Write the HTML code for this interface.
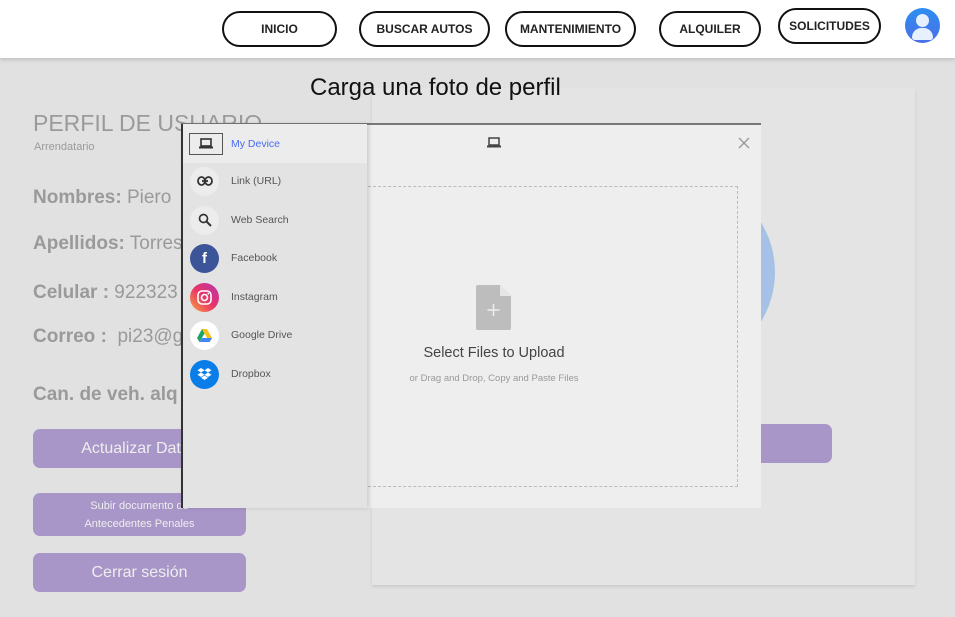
<!DOCTYPE html>
<html><head><meta charset="utf-8"><style>
*{margin:0;padding:0;box-sizing:border-box}
body{width:955px;height:617px;overflow:hidden;background:#e1e1e1;font-family:"Liberation Sans",sans-serif;position:relative}
.hdr{position:absolute;left:0;top:0;width:955px;height:58px;background:#fff;box-shadow:0 2px 4px rgba(0,0,0,.15);z-index:5}
.nb{position:absolute;height:36px;border:2px solid #111;border-radius:18px;font-size:12px;font-weight:bold;color:#222;display:flex;align-items:center;justify-content:center}
.abs{position:absolute}
.lab{color:#9a9a9a;font-size:19px;position:absolute;left:33px}
.lab b{font-weight:bold}
.btn{position:absolute;left:33px;width:213px;background:#a896c8;border-radius:7px;color:#eee;display:flex;align-items:center;justify-content:center;text-align:center}
.item{position:absolute;left:0;width:184px;height:38px;display:flex;align-items:center;font-size:10.5px;color:#555}
.ic{width:29px;height:29px;border-radius:50%;margin-left:7px;margin-right:12px;display:flex;align-items:center;justify-content:center}
</style></head><body>
<div class="hdr">
<div class="nb" style="left:222px;top:11px;width:115px">INICIO</div>
<div class="nb" style="left:359px;top:11px;width:131px">BUSCAR AUTOS</div>
<div class="nb" style="left:505px;top:11px;width:131px">MANTENIMIENTO</div>
<div class="nb" style="left:659px;top:11px;width:102px">ALQUILER</div>
<div class="nb" style="left:778px;top:8px;width:103px">SOLICITUDES</div>
<div class="abs" style="left:905px;top:8px;width:35px;height:35px;border-radius:50%;background:linear-gradient(#2d8ef0,#4b6fe8);overflow:hidden">
<div class="abs" style="left:11px;top:6px;width:13px;height:13px;border-radius:50%;background:#e6f0ff"></div>
<div class="abs" style="left:7px;top:20px;width:21px;height:12px;border-radius:10px 10px 3px 3px;background:#e6f0ff"></div>
</div>
</div>
<div class="abs" style="left:372px;top:88px;width:543px;height:497px;background:#e4e4e4;box-shadow:0 2px 3px rgba(0,0,0,.1);overflow:hidden">
<div class="abs" style="left:213px;top:89px;width:190px;height:190px;border-radius:50%;background:#a6c1e6"></div>
<div class="abs" style="left:330px;top:336px;width:130px;height:39px;border-radius:7px;background:#a896c8"></div>
</div>
<div class="abs" style="left:310px;top:74px;font-size:24px;color:#111">Carga una foto de perfil</div>
<div class="abs" style="left:33px;top:110px;font-size:23px;color:#9a9a9a">PERFIL DE USUARIO</div>
<div class="abs" style="left:34px;top:141px;font-size:11px;color:#9a9a9a">Arrendatario</div>
<div class="lab" style="top:187px"><b>Nombres:</b> Piero</div>
<div class="lab" style="top:233px"><b>Apellidos:</b> Torres</div>
<div class="lab" style="top:282px"><b>Celular :</b> 922323</div>
<div class="lab" style="top:326px"><b>Correo :</b>&nbsp; pi23@g</div>
<div class="lab" style="top:384px"><b>Can. de veh. alq</b></div>
<div class="btn" style="top:429px;height:39px;font-size:16px">Actualizar Datos</div>
<div class="btn" style="top:493px;height:43px;font-size:11px;line-height:18px">Subir documento de<br>Antecedentes Penales</div>
<div class="btn" style="top:553px;height:39px;font-size:16px">Cerrar sesión</div>
<!-- modal -->
<div class="abs" style="left:181px;top:123px;width:580px;height:2px;background:#777"></div>
<div class="abs" style="left:181px;top:124px;width:186px;height:384px;background:#e3e3e3;border-left:2px solid #333;box-shadow:2px 0 4px rgba(0,0,0,.15);z-index:2">
<div class="item" style="top:0;height:39px;background:#ececec"><div style="margin-left:6px;margin-right:8px;width:34px;height:22px;border:1px solid #555;display:flex;align-items:center;justify-content:center"><svg width="14" height="11" viewBox="0 0 14 11"><rect x="2" y="1" width="10" height="7" fill="none" stroke="#333" stroke-width="1.6"/><rect x="0" y="8.5" width="14" height="2" fill="#333"/></svg></div><span style="color:#4a6cf0">My Device</span></div>
<div class="item" style="top:38px"><div class="ic" style="background:#ececec"><svg width="16" height="10" viewBox="0 0 16 10"><rect x="1" y="1" width="7" height="8" rx="4" fill="none" stroke="#333" stroke-width="1.8"/><rect x="8" y="1" width="7" height="8" rx="4" fill="none" stroke="#333" stroke-width="1.8"/><line x1="5" y1="5" x2="11" y2="5" stroke="#333" stroke-width="1.8"/></svg></div>Link (URL)</div>
<div class="item" style="top:77px"><div class="ic" style="background:#ececec"><svg width="14" height="14" viewBox="0 0 14 14"><circle cx="5.5" cy="5.5" r="4" fill="none" stroke="#333" stroke-width="1.7"/><line x1="8.5" y1="8.5" x2="13" y2="13" stroke="#333" stroke-width="2"/></svg></div>Web Search</div>
<div class="item" style="top:115px"><div class="ic" style="background:#3b5598;color:#fff;font-weight:bold;font-size:15px">f</div>Facebook</div>
<div class="item" style="top:154px"><div class="ic" style="background:linear-gradient(45deg,#f9a53a,#e8336a,#b537b0)"><svg width="15" height="15" viewBox="0 0 15 15"><rect x="1" y="1" width="13" height="13" rx="4" fill="none" stroke="#fff" stroke-width="1.6"/><circle cx="7.5" cy="7.5" r="3" fill="none" stroke="#fff" stroke-width="1.6"/><circle cx="11.3" cy="3.7" r=".9" fill="#fff"/></svg></div>Instagram</div>
<div class="item" style="top:192px"><div class="ic" style="background:#fff"><svg width="15" height="13" viewBox="0 0 15 13"><polygon points="5,0 10,0 15,9 12.5,13" fill="#f8c01b"/><polygon points="5,0 0,9 2.5,13 7.5,4.5" fill="#1fa463"/><polygon points="2.5,13 12.5,13 15,9 5,9" fill="#4385f5"/></svg></div>Google Drive</div>
<div class="item" style="top:231px"><div class="ic" style="background:#0a7ee8"><svg width="15" height="13" viewBox="0 0 15 13"><g fill="#fff"><polygon points="4,0 7.5,2.2 4,4.5 0.5,2.2"/><polygon points="11,0 14.5,2.2 11,4.5 7.5,2.2"/><polygon points="4,4.5 7.5,6.8 4,9 0.5,6.8"/><polygon points="11,4.5 14.5,6.8 11,9 7.5,6.8"/><polygon points="7.5,7.5 11,9.8 7.5,12 4,9.8"/></g></svg></div>Dropbox</div>
</div>
<div class="abs" style="left:367px;top:125px;width:394px;height:383px;background:#eeeeee">
<svg class="abs" style="left:120px;top:12px" width="14" height="11" viewBox="0 0 14 11"><rect x="2" y="1" width="10" height="7" fill="none" stroke="#444" stroke-width="1.5"/><rect x="0" y="8.5" width="14" height="2" fill="#444"/></svg>
<svg class="abs" style="left:371px;top:12px" width="12" height="12" viewBox="0 0 12 12"><path d="M1 1L11 11M11 1L1 11" stroke="#999" stroke-width="1.4"/></svg>
<div class="abs" style="left:1px;top:61px;width:370px;height:301px;border:1px dashed #bbb;border-left:none"></div>
<svg class="abs" style="left:109px;top:160px" width="35" height="45" viewBox="0 0 35 45"><path d="M2 0H24L35 11V43Q35 45 33 45H2Q0 45 0 43V2Q0 0 2 0Z" fill="#bdbdbd"/><path d="M24 0V11H35Z" fill="#e6e6e6"/><path d="M17.5 19V31M11.5 25H23.5" stroke="#eee" stroke-width="1.5"/></svg>
<div class="abs" style="left:0;width:254px;top:220px;text-align:center;font-size:14.5px;color:#444">Select Files to Upload</div>
<div class="abs" style="left:0;width:254px;top:248px;text-align:center;font-size:9.5px;color:#999">or Drag and Drop, Copy and Paste Files</div>
</div>
</body></html>
